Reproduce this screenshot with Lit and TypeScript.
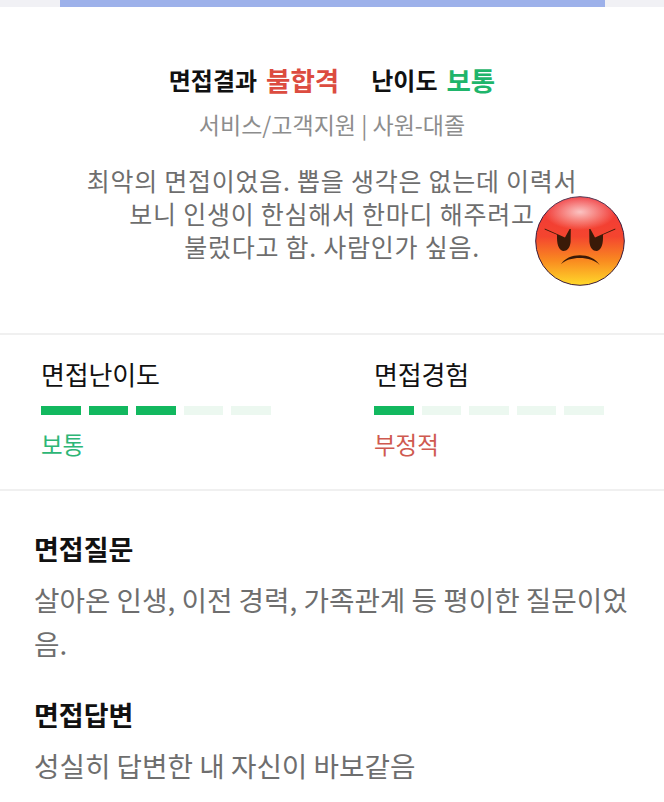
import { LitElement, html, css, svg } from "lit";
import { customElement } from "lit/decorators.js";

const angryFace = svg`
  <defs>
    <linearGradient id="face" x1="0" y1="0" x2="0" y2="1">
      <stop offset="0" stop-color="#f0343a"/>
      <stop offset="0.45" stop-color="#f4452f"/>
      <stop offset="0.72" stop-color="#f98a20"/>
      <stop offset="1" stop-color="#ffd92a"/>
    </linearGradient>
    <radialGradient id="shine" cx="0.5" cy="0.5" r="0.5">
      <stop offset="0" stop-color="#fff" stop-opacity="0.7"/>
      <stop offset="1" stop-color="#fff" stop-opacity="0"/>
    </radialGradient>
  </defs>
  <circle cx="45" cy="45" r="44.3" fill="url(#face)" stroke="#3a1c3c" stroke-width="1"/>
  <ellipse cx="45" cy="16" rx="36" ry="18" fill="url(#shine)"/>
  <path d="M9.7 32.5 L30 41.5 L34.6 33 L35.8 33 L35.6 46 C35 52 32 55 28.5 55 C25 55 22 50 22 42 L22 38.8 L9.7 33.5 Z" fill="#3a1a08"/>
  <path d="M80.3 32.5 L60 41.5 L55.4 33 L54.2 33 L54.4 46 C55 52 58 55 61.5 55 C65 55 68 50 68 42 L68 38.8 L80.3 33.5 Z" fill="#3a1a08"/>
  <path d="M25.7 68.5 C33 56 57 56 64.7 69 C56 59.8 34 59.8 25.7 68.5 Z" fill="#3a1a08"/>
`;

@customElement("app-root")
export class AppRoot extends LitElement {
  static styles = css`
    :host {
      display: block;
      width: 664px;
      height: 802px;
      overflow: hidden;
      background: #fff;
      color: #111;
      font-family: "Noto Sans CJK KR", "Noto Sans", sans-serif;
    }
    .progress {
      height: 7px;
      background: #f1f1f5;
      padding: 0 59px 0 60px;
    }
    .progress div {
      height: 100%;
      background: #9db1ea;
    }
    .summary {
      position: relative;
      height: 328px;
      box-sizing: border-box;
      padding-top: 53px;
      text-align: center;
      border-bottom: 2px solid #f0f0f0;
    }
    .result {
      display: flex;
      justify-content: center;
      align-items: center;
      gap: 32px;
      height: 38px;
      font-size: 24px;
      font-weight: 700;
    }
    .result span {
      display: flex;
      align-items: center;
      gap: 9px;
      white-space: nowrap;
    }
    .result b {
      font-size: 26.5px;
      font-weight: 700;
    }
    .red { color: #dc4c40; }
    .green { color: #1fb56b; }
    .sub {
      margin-top: 11px;
      font-size: 23px;
      line-height: 30px;
      color: #8d8d8d;
    }
    .quote {
      margin-top: 25px;
      font-size: 25px;
      line-height: 33px;
      color: #6e6e6e;
      letter-spacing: 0.75px;
    }
    .emoji {
      position: absolute;
      left: 535px;
      top: 189px;
      width: 90px;
      height: 90px;
    }
    .ratings {
      display: grid;
      grid-template-columns: 333px 1fr;
      height: 156px;
      box-sizing: border-box;
      padding: 20px 0 0 41px;
      border-bottom: 2px solid #f0f0f0;
    }
    .rating h3 {
      margin: 0;
      font-size: 26px;
      line-height: 38px;
      font-weight: 400;
      letter-spacing: -0.2px;
    }
    .bars {
      display: flex;
      gap: 8px;
      margin-top: 13px;
    }
    .bars span {
      width: 39.6px;
      height: 9px;
      background: #ecf8f0;
    }
    .bars span.on { background: #12b85f; }
    .rating p {
      margin: 12px 0 0;
      font-size: 23.5px;
      line-height: 34px;
    }
    .rating p.red { color: #cf5a50; }
    .rating p.green { color: #2db676; }
    .qa {
      padding: 38px 28px 0 34px;
    }
    .qa h3 {
      margin: 0;
      font-size: 27px;
      line-height: 40px;
      font-weight: 700;
    }
    .qa p {
      margin: 8px 0 30px;
      font-size: 27.7px;
      line-height: 44px;
      color: #6e6e6e;
    }
  `;

  private bars(filled: number) {
    return html`<div class="bars">
      ${[0, 1, 2, 3, 4].map((i) => html`<span class=${i < filled ? "on" : ""}></span>`)}
    </div>`;
  }

  render() {
    return html`
      <div class="progress"><div></div></div>
      <section class="summary">
        <div class="result">
          <span>면접결과 <b class="red">불합격</b></span>
          <span>난이도 <b class="green">보통</b></span>
        </div>
        <div class="sub">서비스/고객지원 | 사원-대졸</div>
        <div class="quote">
          최악의 면접이었음. 뽑을 생각은 없는데 이력서<br />
          보니 인생이 한심해서 한마디 해주려고<br />
          불렀다고 함. 사람인가 싶음.
        </div>
        <svg class="emoji" viewBox="0 0 90 90">${angryFace}</svg>
      </section>
      <section class="ratings">
        <div class="rating">
          <h3>면접난이도</h3>
          ${this.bars(3)}
          <p class="green">보통</p>
        </div>
        <div class="rating">
          <h3>면접경험</h3>
          ${this.bars(1)}
          <p class="red">부정적</p>
        </div>
      </section>
      <section class="qa">
        <h3>면접질문</h3>
        <p>살아온 인생, 이전 경력, 가족관계 등 평이한 질문이었음.</p>
        <h3>면접답변</h3>
        <p>성실히 답변한 내 자신이 바보같음</p>
      </section>
    `;
  }
}
